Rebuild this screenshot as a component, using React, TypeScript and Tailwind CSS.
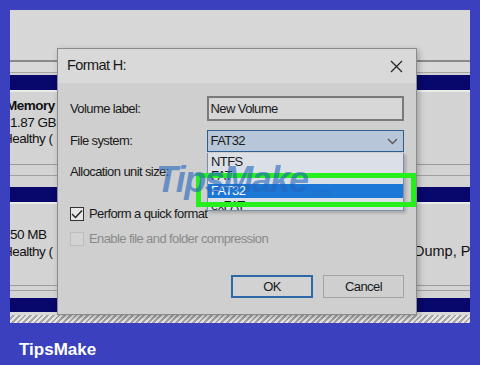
import React from "react";

const SANS = "font-['Liberation_Sans',Arial,sans-serif]";

function Navy({ h }: { h: string }) {
  return <div className={`${h} bg-[#07076c]`} />;
}

export default function App() {
  return (
    <div className={`w-[480px] h-[365px] bg-[#3a40be] flex flex-col overflow-hidden ${SANS}`}>
      <div className="relative mx-[10px] mt-[10px] h-[313px] bg-[#d3d3d3] flex flex-col overflow-hidden text-[#111]">
        {/* background disk management rows */}
        <div className="h-[50px] bg-[#d7d7d7]" />
        <div className="h-[2px] bg-[#8a8a8a]" />
        <div className="h-[10px] bg-[#d9d9d9]" />
        <div className="h-px bg-[#a5a5a5]" />
        <div className="h-[2px]" />
        <Navy h="h-[15px]" />
        <div className="h-[2px] bg-[#ececec]" />
        <div className="h-[72px] flex">
          <div className="w-[47px] overflow-hidden pt-[6px] text-[13.5px] leading-[16.5px] tracking-[-0.5px] whitespace-nowrap">
            <div className="-ml-[4px] font-bold">Memory</div>
            <div className="ml-0">1.87 GB</div>
            <div className="-ml-[7px]">Healthy (</div>
          </div>
          <div className="flex-1" />
        </div>
        <div className="h-px bg-[#9a9a9a]" />
        <div className="h-[10px]" />
        <div className="h-px bg-[#a0a0a0]" />
        <div className="h-[11px]" />
        <Navy h="h-[15px]" />
        <div className="h-[2px] bg-[#ececec]" />
        <div className="h-[81px] flex text-[13.5px] leading-[17px] whitespace-nowrap">
          <div className="w-[47px] overflow-hidden pt-[22px] tracking-[-0.5px]">
            <div className="-ml-[7px]">150 MB</div>
            <div className="-ml-[7px]">Healthy (</div>
          </div>
          <div className="flex-1" />
          <div className="w-[53px] overflow-hidden pt-[39px] text-[14.5px]">
            <div className="-ml-[3px]">Dump, Page</div>
          </div>
        </div>
        <div className="h-px bg-[#9a9a9a]" />
        <div className="h-[4px]" />
        <div className="h-px bg-[#a0a0a0]" />
        <div className="h-[7px]" />
        <Navy h="h-[14px]" />
        <div className="h-[3px] bg-[#d9d9d9]" />
        <div className="h-[8px] bg-[repeating-linear-gradient(135deg,#e6e6e6_0px,#e6e6e6_2px,#a6a6a6_2px,#a6a6a6_4px)]" />

        {/* Format dialog */}
        <div className="absolute left-[47px] top-[38px] w-[360px] h-[267px] border border-[#8b8b8b] bg-[#cfcfcf] flex flex-col shadow-[2px_2px_6px_rgba(0,0,0,0.25)] tracking-[-0.6px]">
          <div className="h-[34px] bg-[#d9d9d9] flex items-center justify-between pl-[9px] pr-[13px]">
            <span className="text-[14.5px] text-[#1a1a1a]">Format H:</span>
            <svg width="13" height="13" viewBox="0 0 13 13">
              <path d="M1 1L12 12M12 1L1 12" stroke="#222" strokeWidth="1.2" fill="none" />
            </svg>
          </div>
          <div className="px-[12px] flex flex-col text-[13px] text-[#1a1a1a]">
            <div className="mt-[13px] h-[25px] flex items-center">
              <div className="w-[137px]">Volume label:</div>
              <div className="w-[198px] h-[25px] border-2 border-[#7a7a7a] bg-[#d7d7d7] pl-[2px] flex items-center">
                New Volume
              </div>
            </div>
            <div className="mt-[9px] h-[22px] flex items-center">
              <div className="w-[137px]">File system:</div>
              <div className="w-[198px] h-[22px] border border-[#2d5e92] bg-[#b7c6d9] pl-[3px] pr-[5px] flex items-center justify-between">
                <span>FAT32</span>
                <svg width="11" height="7" viewBox="0 0 11 7">
                  <path d="M1 1L5.5 5.5L10 1" stroke="#555" strokeWidth="1.3" fill="none" />
                </svg>
              </div>
            </div>
            <div className="mt-[11px] h-[18px] flex items-center">Allocation unit size:</div>
            <div className="mt-[26px] h-[14px] flex items-center gap-[5px]">
              <div className="w-[14px] h-[14px] border border-[#333] bg-[#e6e6e6] flex items-center justify-center">
                <svg width="12" height="10" viewBox="0 0 12 10">
                  <path d="M1 5L4.5 8.5L11 1.5" stroke="#222" strokeWidth="1.4" fill="none" />
                </svg>
              </div>
              <span>Perform a quick format</span>
            </div>
            <div className="mt-[11px] h-[14px] flex items-center gap-[5px] text-[#8a8a8a]">
              <div className="w-[14px] h-[14px] border border-[#bdbdbd] bg-[#d3d3d3]" />
              <span>Enable file and folder compression</span>
            </div>
            <div className="mt-[29px] flex justify-end gap-[10px]">
              <div className="w-[82px] h-[23px] border-2 border-[#2f68a6] bg-[#d2d2d2] flex items-center justify-center">OK</div>
              <div className="w-[81px] h-[23px] border border-[#a3a3a3] bg-[#cfcfcf] flex items-center justify-center">Cancel</div>
            </div>
          </div>

          {/* dropdown list */}
          <div className="absolute left-[149px] top-[104px] w-[197px] h-[58px] bg-[#dbe0e6] border border-t-0 border-[#7d8fa6] overflow-hidden text-[13px] leading-[14px] text-[#1a1a1a] shadow-[2px_2px_3px_rgba(0,0,0,0.2)]">
            <div className="h-[2px]" />
            <div className="h-[14px] pl-[3px]">NTFS</div>
            <div className="h-[13px] pl-[3px]">FAT</div>
            <div className="h-[2px]" />
            <div className="h-[14px] pl-[3px] bg-[#1c78d6] text-white">FAT32</div>
            <div className="h-[14px] pl-[3px] pt-[1px]">exFAT</div>
          </div>
        </div>

        {/* green highlight */}
        <div className="absolute left-[186px] top-[163px] w-[220px] h-[34px] border-[5px] border-[#27ef1d]" />

        {/* watermark */}
        <div className="absolute left-[146px] top-[148px] flex items-end text-[rgba(35,100,190,0.6)] italic font-bold whitespace-nowrap">
          <span className="text-[36px] leading-[44px] tracking-[-1.5px]">TipsMake</span>
          <span className="text-[10px] leading-[18px] not-italic font-normal ml-[2px]">.com</span>
        </div>
      </div>
      <div className="flex-1 pt-[15px] pl-[19px]">
        <span className="font-bold text-[17px] leading-[18px] text-white">TipsMake</span>
      </div>
    </div>
  );
}
